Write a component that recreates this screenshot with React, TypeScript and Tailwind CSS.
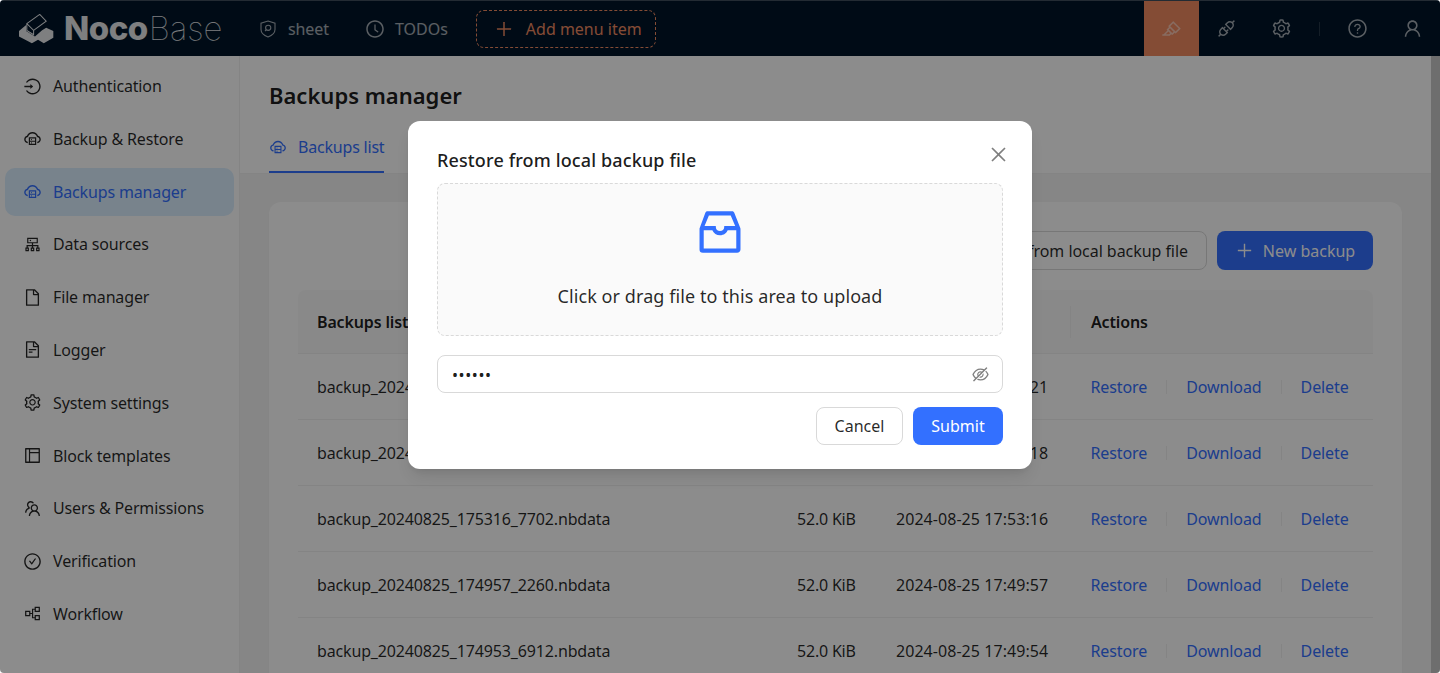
import type { ReactNode } from "react";
import {
  AiOutlineApi,
  AiOutlineCheckCircle,
  AiOutlineClockCircle,
  AiOutlineClose,
  AiOutlineCloudServer,
  AiOutlineCluster,
  AiOutlineEyeInvisible,
  AiOutlineFile,
  AiOutlineFileText,
  AiOutlineHighlight,
  AiOutlineInbox,
  AiOutlineLayout,
  AiOutlineLogin,
  AiOutlinePartition,
  AiOutlinePlus,
  AiOutlineQuestionCircle,
  AiOutlineSetting,
  AiOutlineTeam,
  AiOutlineUser,
} from "react-icons/ai";

const menu: { label: string; icon: ReactNode; active?: boolean }[] = [
  { label: "Authentication", icon: <AiOutlineLogin /> },
  { label: "Backup & Restore", icon: <AiOutlineCloudServer /> },
  { label: "Backups manager", icon: <AiOutlineCloudServer />, active: true },
  { label: "Data sources", icon: <AiOutlineCluster /> },
  { label: "File manager", icon: <AiOutlineFile /> },
  { label: "Logger", icon: <AiOutlineFileText /> },
  { label: "System settings", icon: <AiOutlineSetting /> },
  { label: "Block templates", icon: <AiOutlineLayout /> },
  { label: "Users & Permissions", icon: <AiOutlineTeam /> },
  { label: "Verification", icon: <AiOutlineCheckCircle /> },
  { label: "Workflow", icon: <AiOutlinePartition /> },
];

const backups = [
  { name: "backup_20240825_175321_4410.nbdata", date: "2024-08-25 17:53:21" },
  { name: "backup_20240825_175318_1936.nbdata", date: "2024-08-25 17:53:18" },
  { name: "backup_20240825_175316_7702.nbdata", date: "2024-08-25 17:53:16" },
  { name: "backup_20240825_174957_2260.nbdata", date: "2024-08-25 17:49:57" },
  { name: "backup_20240825_174953_6912.nbdata", date: "2024-08-25 17:49:54" },
];

const Logo = () => (
  <div className="flex items-center">
    <svg width="35" height="30" viewBox="57 42 103 88" className="mr-[10px] text-white/90">
      <path
        d="M57 92 L78 74 L78 92 L104 108 L125 90 L137 82 L158 92 L158 112 L130 128 L113 118 L95 128 L57 108 Z"
        fill="currentColor"
      />
      <path
        d="M80 70 L118 43 L137 63 L100 90 Z M80 70 L80 90 L100 103 L100 90"
        fill="none"
        stroke="currentColor"
        strokeWidth="3"
      />
    </svg>
    <span className="font-['Inter',sans-serif] text-[33px] leading-none font-extrabold tracking-[-0.5px] text-white/90">
      Noco
    </span>
    <span className="ml-[1px] font-['Inter',sans-serif] text-[33px] leading-none font-thin text-white/90">
      Base
    </span>
  </div>
);

const ShieldIcon = () => (
  <svg width="16" height="18" viewBox="0 0 16 18" fill="none" stroke="currentColor" strokeWidth="1.1">
    <path d="M8 1 L15 3.2 V9.5 C15 13 11.5 15.6 8 17 C4.5 15.6 1 13 1 9.5 V3.2 Z" />
    <circle cx="8.2" cy="7.8" r="2.6" />
    <path d="M6.2 9.8 L5 11" />
  </svg>
);

const Header = () => (
  <header className="flex h-14 shrink-0 items-center border-t border-white/25 bg-[#001529] text-white/65">
    <div className="w-[260px] shrink-0 pl-[19px]">
      <Logo />
    </div>
    <div className="flex items-center text-[16px]">
      <ShieldIcon />
      <span className="ml-[12px] tracking-[-0.1px]">sheet</span>
    </div>
    <div className="ml-[36px] flex items-center text-[16px]">
      <AiOutlineClockCircle className="text-[20px]" />
      <span className="ml-[10px]">TODOs</span>
    </div>
    <div className="ml-[28px] flex h-[38px] w-[180px] items-center gap-[12px] rounded-lg border border-dashed border-[#f18b62] pl-[17px] text-[16px] text-[#f18b62]">
      <AiOutlinePlus className="text-[20px]" />
      <span className="whitespace-nowrap">Add menu item</span>
    </div>
    <div className="ml-auto flex h-full items-center text-[21px]">
      <div className="flex h-full w-[55px] items-center justify-center bg-[#f18b62] text-white/50">
        <AiOutlineHighlight />
      </div>
      <div className="flex h-full w-[55px] items-center justify-center">
        <AiOutlineApi />
      </div>
      <div className="flex h-full w-[55px] items-center justify-center">
        <AiOutlineSetting />
      </div>
      <div className="ml-[10px] h-[14px] w-px bg-white/15" />
      <div className="ml-[10px] flex h-full w-[55px] items-center justify-center">
        <AiOutlineQuestionCircle />
      </div>
      <div className="flex h-full w-[55px] items-center justify-center">
        <AiOutlineUser />
      </div>
    </div>
  </header>
);

const Sidebar = () => (
  <aside className="flex h-full w-[240px] shrink-0 flex-col gap-[4.8px] border-r border-[#f0f0f0] bg-white pt-[6px]">
    {menu.map((item) => (
      <div
        key={item.label}
        className={
          item.active
            ? "mx-[5px] flex h-[48px] w-[229px] shrink-0 items-center gap-[11px] rounded-[10px] bg-[#daeeff] pl-[18px] text-[#3370ff]"
            : "mx-[5px] flex h-[48px] w-[229px] shrink-0 items-center gap-[11px] pl-[18px] text-black/85"
        }
      >
        <span className="text-[19px]">{item.icon}</span>
        <span className="text-[16px] tracking-[-0.15px]">{item.label}</span>
      </div>
    ))}
  </aside>
);

const Actions = () => (
  <div className="flex items-center tracking-[-0.1px] text-[#3370ff]">
    <span>Restore</span>
    <span className="mx-[19px] h-[14px] w-px bg-[#f0f0f0]" />
    <span>Download</span>
    <span className="mx-[19px] h-[14px] w-px bg-[#f0f0f0]" />
    <span>Delete</span>
  </div>
);

const BackupsTable = () => (
  <div className="mt-5 overflow-hidden">
    <div className="grid h-[64px] grid-cols-[480px_99px_194px_1fr] items-center rounded-t-lg border-b border-[#f0f0f0] bg-[#fafafa] font-semibold tracking-[-0.15px] text-black/90">
      <div className="pl-[19px]">Backups list</div>
      <div className="pl-[19px]">File size</div>
      <div className="border-r border-[#f0f0f0] pl-[19px] leading-[32px]">Created at</div>
      <div className="pl-[20px]">Actions</div>
    </div>
    {backups.map((row) => (
      <div
        key={row.name}
        className="grid h-[66px] grid-cols-[480px_99px_194px_1fr] items-center border-b border-[#f0f0f0] text-black/85"
      >
        <div className="pl-[19px] tracking-[-0.15px]">{row.name}</div>
        <div className="pl-[19px] tracking-[-0.2px]">52.0 KiB</div>
        <div className="pl-[19px] tracking-[0.05px]">{row.date}</div>
        <div className="pl-[19.5px]">
          <Actions />
        </div>
      </div>
    ))}
  </div>
);

const Content = () => (
  <main className="flex h-full min-w-0 flex-1 flex-col overflow-hidden bg-[#f5f5f5]">
    <div className="h-[118px] shrink-0 border-b border-[#f0f0f0] bg-white px-[29px]">
      <h1 className="pt-[23px] text-[22px] leading-[32px] font-semibold text-black/90">Backups manager</h1>
      <div className="mt-[16px] flex h-[46px] w-[115px] items-center gap-[11px] border-b-2 border-[#3370ff] pb-1 whitespace-nowrap text-[#3370ff]">
        <AiOutlineCloudServer className="shrink-0 text-[18px]" />
        <span className="text-[16px] tracking-[-0.2px]">Backups list</span>
      </div>
    </div>
    <div className="px-[29px] pt-[28px]">
      <div className="rounded-xl bg-white px-[29px] pt-[29px] shadow-[0_1px_2px_rgba(0,0,0,0.03)]">
        <div className="flex justify-end gap-[10px]">
          <button className="h-[39px] rounded-lg border border-[#d9d9d9] bg-white px-[18px] tracking-[-0.05px] text-black/85">
            Restore from local backup file
          </button>
          <button className="flex h-[39px] w-[156px] items-center justify-center gap-[9px] rounded-lg bg-[#3370ff] text-white">
            <AiOutlinePlus className="text-[19px]" />
            New backup
          </button>
        </div>
        <BackupsTable />
      </div>
    </div>
  </main>
);

const RestoreModal = () => (
  <div className="absolute top-[121px] left-[408px] w-[624px] rounded-xl bg-white px-[29px] pt-[27px] pb-[24px] shadow-lg">
    <div className="flex items-start justify-between">
      <h2 className="text-[18px] leading-[24px] font-medium tracking-[0.13px] text-black/90">
        Restore from local backup file
      </h2>
      <AiOutlineClose className="absolute top-[23px] right-[23px] text-[21px] text-black/50" />
    </div>
    <div className="mt-[11px] flex h-[153px] flex-col items-center rounded-lg border border-dashed border-[#d9d9d9] bg-[#fafafa]">
      <AiOutlineInbox className="mt-[20px] text-[56px] text-[#3370ff]" />
      <p className="mt-[22px] text-[18px] leading-[28px] tracking-[0.08px] text-black/85">
        Click or drag file to this area to upload
      </p>
    </div>
    <div className="mt-[19px] flex h-[38px] items-center justify-between rounded-lg border border-[#d9d9d9] pr-[12px] pl-[14px]">
      <span className="pt-[1px] text-[16px] leading-none tracking-[0.6px] text-black/90">••••••</span>
      <AiOutlineEyeInvisible className="text-[19px] text-black/50" />
    </div>
    <div className="mt-[14px] flex justify-end gap-[10px]">
      <button className="h-[38px] w-[87px] rounded-lg border border-[#d9d9d9] bg-white text-black/85">Cancel</button>
      <button className="h-[38px] w-[90px] rounded-lg bg-[#3370ff] text-white">Submit</button>
    </div>
  </div>
);

export default function App() {
  return (
    <div className="relative h-[673px] w-[1440px] overflow-hidden rounded-[4px] bg-white font-['Noto_Sans',sans-serif] text-[16px]">
      <div className="flex h-full flex-col">
        <Header />
        <div className="flex min-h-0 flex-1">
          <Sidebar />
          <Content />
          <div className="h-full w-[9px] shrink-0 bg-[#c8c8c8]" />
        </div>
      </div>
      <div className="absolute inset-0 bg-black/45" />
      <RestoreModal />
    </div>
  );
}
